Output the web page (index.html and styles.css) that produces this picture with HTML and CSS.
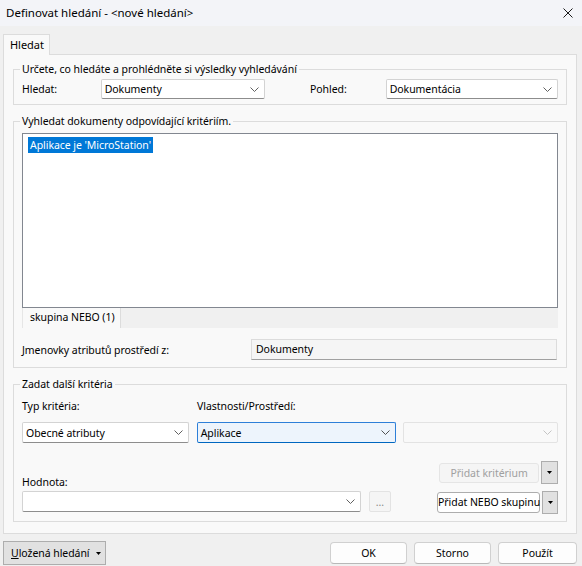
FILE: index.html
```html
<!DOCTYPE html>
<html>
<head>
<meta charset="utf-8">
<link rel="stylesheet" href="styles.css">
</head>
<body>
<div class="titlebar">
  <span class="title">Definovat hledání - &lt;nové hledání&gt;</span>
  <svg class="close" width="10" height="10" viewBox="0 0 10 10"><path d="M0.5 0.5 L9.5 9.5 M9.5 0.5 L0.5 9.5" stroke="#1a1a1a" stroke-width="1" fill="none"/></svg>
</div>
<div class="tabs"><div class="tab">Hledat</div></div>
<div class="panel">
  <fieldset class="group g1">
    <legend>Určete, co hledáte a prohlédněte si výsledky vyhledávání</legend>
    <div class="row1">
      <span class="lbl-hledat">Hledat:</span>
      <div class="combo w-hledat"><span>Dokumenty</span><svg class="chev" width="9" height="5" viewBox="0 0 9 5"><path d="M0.5 0.5 L4.5 4.5 L8.5 0.5" stroke="#606060" fill="none"/></svg></div>
      <span class="lbl-pohled">Pohled:</span>
      <div class="combo w-pohled"><span>Dokumentácia</span><svg class="chev" width="9" height="5" viewBox="0 0 9 5"><path d="M0.5 0.5 L4.5 4.5 L8.5 0.5" stroke="#606060" fill="none"/></svg></div>
    </div>
  </fieldset>
  <fieldset class="group g2">
    <legend>Vyhledat dokumenty odpovídající kritériím.</legend>
    <div class="listbox"><span class="sel">Aplikace je 'MicroStation'</span></div>
    <div class="substrip"><div class="subtab">skupina NEBO (1)</div></div>
    <div class="rowenv">
      <span class="lbl-env">Jmenovky atributů prostředí z:</span>
      <div class="rofield">Dokumenty</div>
    </div>
  </fieldset>
  <fieldset class="group g3">
    <legend>Zadat další kritéria</legend>
    <div class="rowA">
      <span class="lbl-typ">Typ kritéria:</span>
      <span>Vlastnosti/Prostředí:</span>
    </div>
    <div class="rowB">
      <div class="combo w-typ"><span>Obecné atributy</span><svg class="chev" width="9" height="5" viewBox="0 0 9 5"><path d="M0.5 0.5 L4.5 4.5 L8.5 0.5" stroke="#606060" fill="none"/></svg></div>
      <div class="combo focused w-vl"><span>Aplikace</span><svg class="chev" width="9" height="5" viewBox="0 0 9 5"><path d="M0.5 0.5 L4.5 4.5 L8.5 0.5" stroke="#505050" fill="none"/></svg></div>
      <div class="combo disabled w-dis"><span></span><svg class="chev" width="9" height="5" viewBox="0 0 9 5"><path d="M0.5 0.5 L4.5 4.5 L8.5 0.5" stroke="#c4c4c4" fill="none"/></svg></div>
    </div>
    <div class="rowC">
      <div class="valcol">
        <span class="lbl-hod">Hodnota:</span>
        <div class="valrow">
          <div class="combo w-val"><span></span><svg class="chev" width="9" height="5" viewBox="0 0 9 5"><path d="M0.5 0.5 L4.5 4.5 L8.5 0.5" stroke="#606060" fill="none"/></svg></div>
          <div class="dots">...</div>
        </div>
      </div>
      <div class="btncol">
        <div class="btnrow r1">
          <div class="wbtn disabled b-krit">Přidat kritérium</div>
          <div class="ddbtn"><svg width="5" height="3" viewBox="0 0 5 3"><path d="M0 0 H5 L2.5 3 Z" fill="#000"/></svg></div>
        </div>
        <div class="btnrow r2">
          <div class="wbtn b-nebo">Přidat NEBO skupinu</div>
          <div class="ddbtn"><svg width="5" height="3" viewBox="0 0 5 3"><path d="M0 0 H5 L2.5 3 Z" fill="#000"/></svg></div>
        </div>
      </div>
    </div>
  </fieldset>
</div>
<div class="footer">
  <div class="classic saved"><span><u>U</u>ložená hledání</span><svg width="5" height="3" viewBox="0 0 5 3"><path d="M0 0 H5 L2.5 3 Z" fill="#000"/></svg></div>
  <div class="spacer"></div>
  <div class="fbtn b-ok">OK</div>
  <div class="fbtn b-storno">Storno</div>
  <div class="fbtn b-pouzit">Použít</div>
</div>
</body>
</html>
```
FILE: styles.css
```css
* { box-sizing: border-box; }
html, body { margin: 0; padding: 0; }
body {
  width: 582px;
  height: 566px;
  overflow: hidden;
  background: #f0f0f0;
  font-family: "Noto Sans", "DejaVu Sans", sans-serif;
  font-size: 10.5px;
  letter-spacing: -0.05px;
  color: #000;
}
.titlebar {
  height: 26px;
  background: #f3f4f8;
  display: flex;
  align-items: center;
  justify-content: space-between;
  padding: 0 9px 0 6px;
}
.title { font-size: 11.5px; letter-spacing: 0; line-height: 16px; }
.close { display: block; }

.tabs { display: flex; padding-left: 3px; margin-top: 8px; }
.tab {
  position: relative;
  z-index: 1;
  width: 47px;
  height: 21px;
  margin-bottom: -1px;
  padding-left: 6px;
  border: 1px solid #dcdcdc;
  border-bottom: none;
  background: #f9f9f9;
  line-height: 19px;
  font-size: 11px;
}
.panel {
  margin-left: 3px;
  width: 574px;
  height: 480px;
  border: 1px solid #dcdcdc;
  background: #f9f9f9;
  padding: 0 0 0 9px;
}
.group {
  margin: 0;
  width: 554px;
  min-width: 0;
  padding: 0 8px;
  border: 1px solid #dcdcdc;
}
.group legend {
  padding: 0 2px;
  margin-left: -2px;
  height: 14px;
  line-height: 14px;
}
.g1 { margin-top: 7px; padding-top: 3px; padding-bottom: 5px; }
.g2 { margin-top: 9px; padding-top: 5px; padding-bottom: 7px; }
.g3 { margin-top: 9px; padding-top: 7px; padding-bottom: 7px; }

.row1 { display: flex; align-items: center; height: 20px; }
.lbl-hledat { width: 79px; }
.lbl-pohled { width: 76px; margin-left: 45px; }

.combo {
  height: 20px;
  display: flex;
  align-items: center;
  justify-content: space-between;
  padding: 0 5px 0 3px;
  background: #fff;
  border: 1px solid #d3d3d3;
  border-bottom-color: #8d8d8d;
  border-radius: 2px;
  line-height: 16px;
  white-space: nowrap;
}
.combo .chev { display: block; flex: none; }
.combo.focused { background: #edf4fc; border-color: #2d7fd8; border-bottom-color: #0067c0; }
.combo.disabled { background: #f9f9f9; border-color: #e3e3e3; }
.w-hledat { width: 165px; }
.w-pohled { width: 173px; }

.listbox {
  width: 536px;
  height: 175px;
  border: 1px solid #828790;
  background: #fff;
  padding: 3px 0 0 5px;
}
.sel {
  display: inline-block;
  padding: 0 2px;
  line-height: 16px;
  background: #0078d7;
  color: #fff;
}
.substrip { display: flex; width: 536px; height: 20px; background: #f0f0f0; }
.subtab {
  width: 99px;
  height: 20px;
  padding-left: 7px;
  background: #f9f9f9;
  border-left: 1px solid #e6e6e6;
  border-right: 1px solid #dcdcdc;
  line-height: 19px;
  white-space: nowrap;
}
.rowenv { display: flex; align-items: center; margin-top: 11px; height: 21px; }
.lbl-env { width: 229px; }
.rofield {
  width: 306px;
  height: 21px;
  padding-left: 4px;
  background: #f5f5f5;
  border: 1px solid #dcdcdc;
  border-bottom-color: #a0a0a0;
  line-height: 19px;
}

.rowA { display: flex; height: 16px; line-height: 16px; }
.lbl-typ { width: 175px; }
.rowB { display: flex; margin-top: 8px; }
.rowB .combo { height: 21px; }
.w-typ { width: 167px; margin-right: 8px; }
.w-vl { width: 200px; margin-right: 7px; }
.w-dis { width: 155px; }

.rowC { display: flex; justify-content: space-between; align-items: flex-end; margin-top: 18px; }
.valcol { display: flex; flex-direction: column; margin-bottom: 2px; }
.lbl-hod { line-height: 16px; height: 16px; }
.valrow { display: flex; margin-top: 1px; }
.w-val { width: 339px; height: 21px; }
.dots {
  width: 22px;
  height: 21px;
  margin-left: 8px;
  background: #f5f5f5;
  border: 1px solid #e3e3e3;
  border-radius: 2px;
  color: #8a8a8a;
  text-align: center;
  line-height: 20px;
}
.btncol { display: flex; flex-direction: column; width: 121px; }
.btnrow { display: flex; align-items: center; height: 23px; }
.btnrow.r2 { margin-top: 7px; }
.wbtn {
  height: 21px;
  border-radius: 3px;
  text-align: center;
  line-height: 19px;
  white-space: nowrap;
}
.wbtn.disabled { background: #f5f5f5; border: 1px solid #e5e5e5; color: #a0a0a0; }
.b-krit { width: 101px; margin-left: 2px; margin-right: 2px; height: 20px; line-height: 18px; }
.b-nebo { width: 103px; margin-left: 0; margin-right: 2px; background: #fff; border: 1px solid #adadad; }
.ddbtn {
  width: 17px;
  height: 23px;
  display: flex;
  align-items: center;
  justify-content: center;
  background: #e1e1e1;
  border: 1px solid #adadad;
}
.ddbtn svg { display: block; }

.footer { display: flex; align-items: flex-start; padding: 7px 5px 0 3px; }
.classic {
  display: flex;
  align-items: center;
  height: 24px;
  background: #e1e1e1;
  border: 1px solid #adadad;
  white-space: nowrap;
}
.saved { width: 103px; padding-left: 7px; }
.saved svg { margin-left: 6px; display: block; flex: none; }
.spacer { flex: 1; }
.fbtn {
  height: 22px;
  margin-top: 1px;
  margin-left: 7px;
  background: #fdfdfd;
  border: 1px solid #d0d0d0;
  border-bottom-color: #b8b8b8;
  border-radius: 4px;
  text-align: center;
  line-height: 20px;
}
.b-ok { width: 77px; }
.b-storno { width: 77px; }
.b-pouzit { width: 79px; }
```
